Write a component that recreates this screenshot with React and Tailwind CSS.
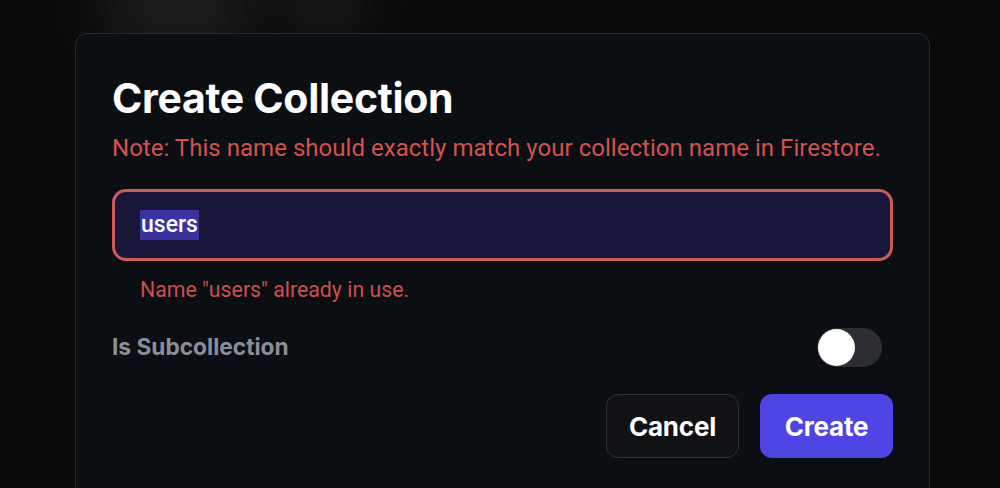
import React from "react";

export default function App() {
  return (
    <div className="relative h-[488px] w-[1000px] overflow-hidden bg-[#0a0a0b]">
      <div className="pointer-events-none absolute left-[100px] top-[-40px] h-[90px] w-[160px] rounded-full bg-[#1e1e1f] blur-[30px]" />
      <div className="pointer-events-none absolute left-[280px] top-[-40px] h-[80px] w-[90px] rounded-full bg-[#19191a] blur-[25px]" />
      <div className="relative flex pt-[33px] pl-[75px]">
        <div
          className="flex h-[480px] w-[855px] flex-col rounded-[12px] border border-[#282c32] bg-[#0b0e12] px-[36px] pt-[40px]"
          style={{ fontFamily: "Roboto, 'Liberation Sans', sans-serif" }}
        >
          <h1
            className="text-[41px] font-bold leading-[48px] tracking-[-0.3px] text-white"
            style={{ fontFamily: "Inter, 'Liberation Sans', sans-serif" }}
          >
            Create Collection
          </h1>
          <p className="mt-[11px] text-[24px] leading-[30px] tracking-[0.03px] text-[#d5524c]">
            Note: This name should exactly match your collection name in Firestore.
          </p>
          <div className="mt-[26px] flex h-[72px] items-center rounded-[14px] border-[3px] border-[#cf5a55] bg-[#191739] pl-[25px]">
            <span className="bg-[#3a32a0] px-[1px] text-[23px] font-medium leading-[30px] text-white">
              users
            </span>
          </div>
          <p className="mt-[16px] pl-[28px] text-[21.3px] leading-[26px] text-[#cc4f4a]">
            Name "users" already in use.
          </p>
          <div className="mt-[25px] flex items-center justify-between pr-[11px]">
            <span
              className="text-[22.7px] font-bold text-[#8a8f97]"
              style={{ fontFamily: "Inter, 'Liberation Sans', sans-serif" }}
            >
              Is Subcollection
            </span>
            <div className="flex h-[39px] w-[65px] items-center rounded-full bg-[#2c2e33] pl-[1px]">
              <div className="h-[37px] w-[37px] rounded-full bg-white" />
            </div>
          </div>
          <div
            className="mt-[27px] flex justify-end gap-[21px]"
            style={{ fontFamily: "Inter, 'Liberation Sans', sans-serif" }}
          >
            <button className="h-[64px] w-[133px] rounded-[12px] border border-[#2e3136] bg-[#101215] text-[26px] font-bold tracking-[-0.2px] text-white">
              Cancel
            </button>
            <button className="h-[64px] w-[133px] rounded-[12px] bg-[#4f44e4] text-[26px] font-bold tracking-[-0.2px] text-white">
              Create
            </button>
          </div>
        </div>
      </div>
    </div>
  );
}
